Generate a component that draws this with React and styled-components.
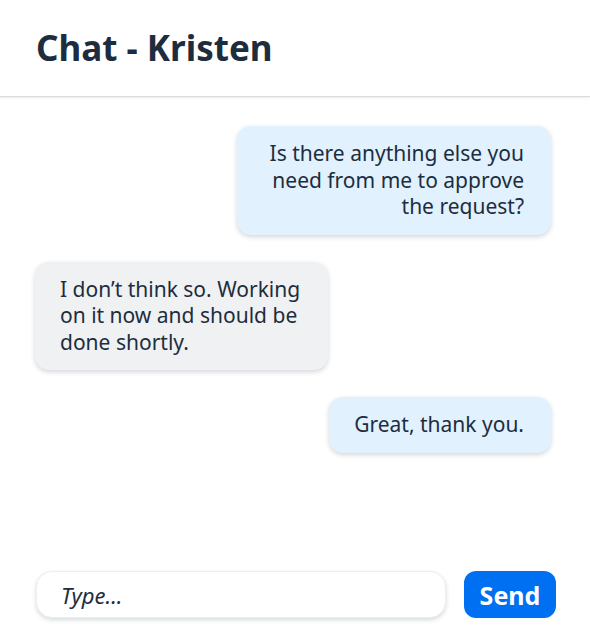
import React from 'react';
import styled, { createGlobalStyle } from 'styled-components';

const GlobalStyle = createGlobalStyle`
  html, body {
    margin: 0;
    padding: 0;
    background: #ffffff;
    font-family: "Noto Sans", "Open Sans", sans-serif;
    color: #1d2d3e;
  }
  * { box-sizing: border-box; }
`;

const messages = [
  { id: 1, mine: true, maxWidth: 314, text: 'Is there anything else you need from me to approve the request?' },
  { id: 2, mine: false, maxWidth: 293, text: 'I don\u2019t think so. Working on it now and should be done shortly.' },
  { id: 3, mine: true, maxWidth: 314, text: 'Great, thank you.' },
];

const App = () => {
  return (
    <Page>
      <GlobalStyle />
      <Header>
        <Title>Chat - Kristen</Title>
      </Header>
      <Messages>
        {messages.map(msg => (
          <Row key={msg.id} mine={msg.mine}>
            <Bubble $mine={msg.mine} $maxWidth={msg.maxWidth}>{msg.text}</Bubble>
          </Row>
        ))}
      </Messages>
      <Composer>
        <Input placeholder="Type..." />
        <SendButton>Send</SendButton>
      </Composer>
    </Page>
  );
};

const Page = styled.div`
  height: 640px;
  display: flex;
  flex-direction: column;
`;

const Header = styled.header`
  height: 97px;
  display: flex;
  align-items: center;
  padding: 0 36px 2px;
  border-bottom: 1px solid #d9dcdf;
  box-shadow: 0 1px 2px rgba(0, 0, 0, 0.08);
`;

const Title = styled.h1`
  margin: 0;
  font-size: 35px;
  font-weight: 700;
  color: #1d2d3e;
`;

const Messages = styled.main`
  flex: 1;
  display: flex;
  flex-direction: column;
  gap: 27px;
  padding: 29px 39px 0 35px;
`;

const Row = styled.div.withConfig({ shouldForwardProp: p => p !== 'mine' })`
  display: flex;
  justify-content: ${p => (p.mine ? 'flex-end' : 'flex-start')};
`;

const Bubble = styled.div`
  max-width: ${p => p.$maxWidth}px;
  padding: 14px 27px 15px 25px;
  border-radius: 14px;
  font-size: 21px;
  line-height: 26.5px;
  text-align: ${p => (p.$mine ? 'right' : 'left')};
  background: ${p => (p.$mine ? '#e1f1fe' : '#eff1f2')};
  box-shadow: 0 2px 5px rgba(34, 54, 73, 0.2);
`;

const Composer = styled.footer`
  display: flex;
  align-items: center;
  gap: 18px;
  padding: 0 34px 22px 36px;
`;

const Input = styled.input`
  flex: 1;
  height: 47px;
  padding: 0 24px;
  border: 1px solid #eceef0;
  border-radius: 16px;
  background: #ffffff;
  box-shadow: 0 2px 4px rgba(34, 54, 73, 0.18);
  font-family: "Noto Sans", "Open Sans", sans-serif;
  font-size: 22px;
  font-style: italic;
  color: #1d2d3e;
  outline: none;

  &::placeholder {
    color: #1d2d3e;
    opacity: 1;
  }
`;

const SendButton = styled.button`
  width: 92px;
  height: 47px;
  border: none;
  border-radius: 12px;
  background: #0070f2;
  color: #ffffff;
  font-family: "Noto Sans", "Open Sans", sans-serif;
  font-size: 25px;
  font-weight: 700;
  cursor: pointer;
`;

export default App;
